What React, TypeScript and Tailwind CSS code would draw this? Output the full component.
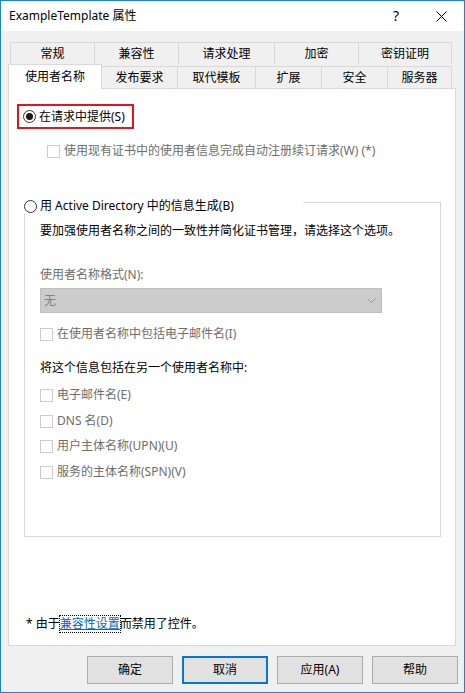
import React from "react";

const font = { fontFamily: '"Noto Sans", "Noto Sans CJK SC", sans-serif' };

const topTabs = [
  { label: "常规", w: "w-[84px]" },
  { label: "兼容性", w: "w-[84px]" },
  { label: "请求处理", w: "w-[96px]" },
  { label: "加密", w: "w-[84px]" },
  { label: "密钥证明", w: "w-[94px]" },
];

const bottomTabs = [
  { label: "发布要求", w: "w-[76px]" },
  { label: "取代模板", w: "w-[78px]" },
  { label: "扩展", w: "w-[66px]" },
  { label: "安全", w: "w-[66px]" },
  { label: "服务器", w: "w-[64px]" },
];

function Check({ label, className = "" }: { label: string; className?: string }) {
  return (
    <div className={"flex h-[16px] items-center gap-[4px] " + className}>
      <span className="box-border h-[13px] w-[13px] shrink-0 border border-[#cccccc] bg-white" />
      <span className="whitespace-nowrap text-[12px] leading-[16px] text-[#6d6d6d]">{label}</span>
    </div>
  );
}

function Radio({ checked }: { checked?: boolean }) {
  return (
    <span className="box-border flex h-[13px] w-[13px] shrink-0 items-center justify-center rounded-full border border-[#333333] bg-white">
      {checked && <span className="h-[7px] w-[7px] rounded-full bg-[#1a1a1a]" />}
    </span>
  );
}

export default function App() {
  return (
    <div
      style={font}
      className="box-border flex h-[693px] w-[465px] flex-col border border-[#1883d7] bg-[#f0f0f0] text-[#000000]"
    >
      {/* title bar */}
      <div className="flex h-[30px] shrink-0 items-center bg-white pl-[8px]">
        <span className="text-[12px] leading-[16px]">ExampleTemplate 属性</span>
        <span className="ml-auto mr-[37px] text-[14px] leading-[16px]">?</span>
        <svg width="11" height="11" viewBox="0 0 11 11" className="mr-[17px]">
          <path d="M0.5 0.5 L10.5 10.5 M10.5 0.5 L0.5 10.5" stroke="#000" strokeWidth="1" />
        </svg>
      </div>

      {/* tabs */}
      <div className="mt-[11px] flex pl-[9px]">
        {topTabs.map((t) => (
          <div
            key={t.label}
            className={
              "box-border flex h-[22px] items-center justify-center border-l border-t border-[#d9d9d9] text-[12px] last:border-r " +
              t.w
            }
          >
            {t.label}
          </div>
        ))}
      </div>
      <div className="flex items-end pl-[7px]">
        <div className="relative z-10 box-border flex h-[24px] w-[94px] items-center justify-center border-l border-r border-t border-[#d9d9d9] bg-white text-[12px]">
          使用者名称
          <span className="absolute bottom-[-1px] left-0 right-0 h-px bg-white" />
        </div>
        {bottomTabs.map((t) => (
          <div
            key={t.label}
            className={
              "box-border flex h-[22px] items-center justify-center border-r border-t border-[#d9d9d9] text-[12px] " +
              t.w
            }
          >
            {t.label}
          </div>
        ))}
      </div>

      {/* panel */}
      <div className="ml-[7px] box-border flex h-[558px] w-[448px] flex-col border border-[#d9d9d9] bg-white">
        <div className="ml-[8px] mt-[15px] box-border flex h-[25px] w-[117px] items-center gap-[3px] border-2 border-[#e3141e] pl-[4px]">
          <Radio checked />
          <span className="text-[12px] leading-[16px]">在请求中提供(S)</span>
        </div>

        <Check className="ml-[38px] mt-[14px]" label="使用现有证书中的使用者信息完成自动注册续订请求(W) (*)" />

        {/* group box */}
        <div className="relative ml-[15px] mt-[43px] box-border flex h-[335px] w-[417px] flex-col border border-[#d9d9d9] pl-[15px]">
          <div className="absolute left-[-2px] top-[-5px] flex h-[16px] w-[280px] items-center gap-[3px] bg-white pl-[1px]">
            <Radio />
            <span className="whitespace-nowrap text-[12px] leading-[16px]">用 Active Directory 中的信息生成(B)</span>
          </div>

          <div className="mt-[20px] h-[16px] text-[12px] leading-[16px]">
            要加强使用者名称之间的一致性并简化证书管理，请选择这个选项。
          </div>
          <div className="mt-[28px] h-[16px] text-[12px] leading-[16px] text-[#6d6d6d]">使用者名称格式(N):</div>
          <div className="mt-[5px] box-border flex h-[25px] w-[342px] items-center border border-[#bfbfbf] bg-[#cccccc] pl-[3px] pr-[5px]">
            <span className="text-[12px] leading-[16px] text-[#838383]">无</span>
            <svg width="9" height="5" viewBox="0 0 9 5" className="ml-auto">
              <path d="M0.5 0.5 L4.5 4.5 L8.5 0.5" stroke="#999999" fill="none" strokeWidth="1" />
            </svg>
          </div>
          <Check className="mt-[13px]" label="在使用者名称中包括电子邮件名(I)" />
          <div className="mt-[18px] h-[16px] text-[12px] leading-[16px]">将这个信息包括在另一个使用者名称中:</div>
          <Check className="mt-[11px]" label="电子邮件名(E)" />
          <Check className="mt-[10px]" label="DNS 名(D)" />
          <Check className="mt-[9px]" label="用户主体名称(UPN)(U)" />
          <Check className="mt-[10px]" label="服务的主体名称(SPN)(V)" />
        </div>

        <div className="ml-[17px] mt-[79px] flex h-[16px] items-center text-[12px] leading-[16px]">
          <span>*&nbsp;由于</span>
          <span className="text-[#0066cc] underline outline-1 outline-dotted outline-[#000000]">兼容性设置</span>
          <span>而禁用了控件。</span>
        </div>
      </div>

      {/* buttons */}
      <div className="ml-[86px] mt-[10px] flex gap-[9px]">
        {["确定", "取消", "应用(A)", "帮助"].map((b) => (
          <div
            key={b}
            className={
              "box-border flex h-[28px] w-[86px] items-center justify-center bg-[#e1e1e1] text-[12px] " +
              (b === "取消" ? "border-2 border-[#0078d7]" : "border border-[#adadad]")
            }
          >
            {b}
          </div>
        ))}
      </div>
    </div>
  );
}
